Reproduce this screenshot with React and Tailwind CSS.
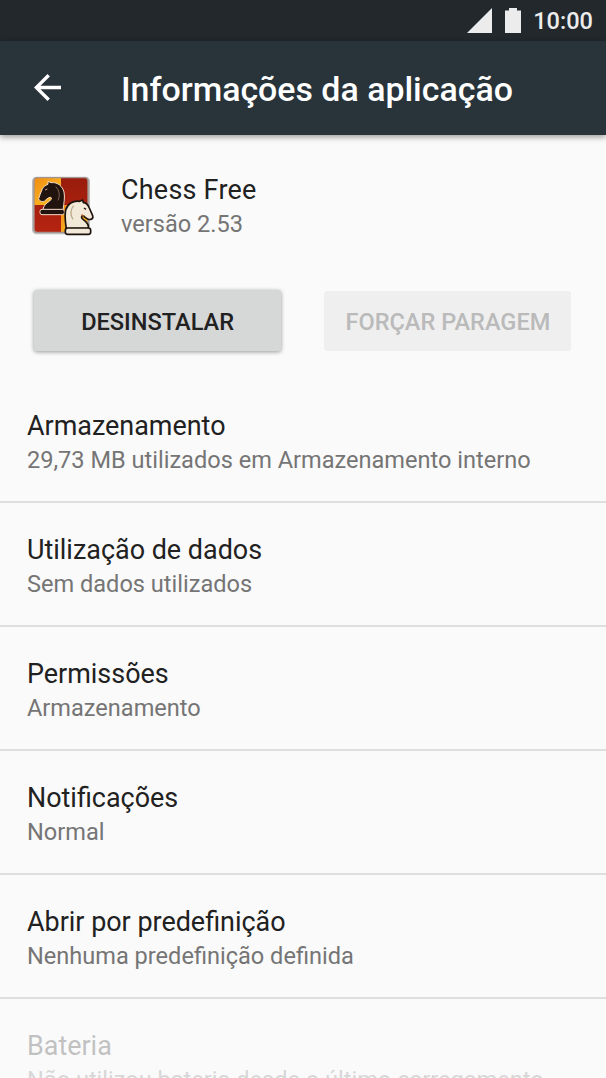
// AppInfoPage
import React from 'react';

const settings = [
    { title: 'Armazenamento', summary: '29,73 MB utilizados em Armazenamento interno' },
    { title: 'Utilização de dados', summary: 'Sem dados utilizados' },
    { title: 'Permissões', summary: 'Armazenamento' },
    { title: 'Notificações', summary: 'Normal' },
    { title: 'Abrir por predefinição', summary: 'Nenhuma predefinição definida' },
    { title: 'Bateria', summary: 'Não utilizou bateria desde o último carregamento', disabled: true },
];

const ChessIcon = () => (
    <svg viewBox="0 0 210 180" className="h-[60px] w-[70px] shrink-0 overflow-visible" aria-hidden="true">
        <defs>
            <linearGradient id="gold" x1="0" y1="0" x2="1" y2="1">
                <stop offset="0" stopColor="#f08a10" />
                <stop offset="1" stopColor="#ffc928" />
            </linearGradient>
            <linearGradient id="red" x1="0" y1="0" x2="0" y2="1">
                <stop offset="0" stopColor="#981c0c" />
                <stop offset="1" stopColor="#b52410" />
            </linearGradient>
            <clipPath id="tile">
                <rect x="15" y="8" width="162" height="164" rx="10" />
            </clipPath>
        </defs>
        <rect x="9" y="5" width="174" height="173" rx="14" fill="#000" opacity="0.25" />
        <g clipPath="url(#tile)">
            <rect x="14" y="6" width="164" height="166" fill="url(#red)" />
            <rect x="14" y="6" width="82" height="84" fill="url(#gold)" />
            <rect x="96" y="90" width="82" height="82" fill="url(#gold)" />
        </g>
        <rect x="15" y="8" width="162" height="164" rx="10" fill="none" stroke="#a39490" strokeWidth="4" />
        {/* black knight */}
        <g fill="#21130e" stroke="#f3d9c8" strokeWidth="3" strokeLinejoin="round">
            <path d="M42 104 C43 92 52 85 62 78 C69 72 69 67 63 67 C56 69 52 73 47 78 C40 82 31 78 29 71 C32 62 35 53 39 44 C42 36 49 31 57 28 L57 19 L66 23 C86 21 100 33 105 51 C108 67 105 83 102 104 Z" />
            <rect x="33" y="103" width="73" height="16" rx="6" />
        </g>
        <path d="M80 35 C91 46 94 60 87 76" fill="none" stroke="#806659" strokeWidth="3" />
        <path d="M48 45 L55 42" stroke="#c3aa9a" strokeWidth="3" />
        {/* white knight */}
        <g fill="#f2e9d8" stroke="#1d130e" strokeWidth="5" strokeLinejoin="round">
            <path d="M178 161 C181 149 173 141 163 134 C155 128 156 123 164 124 C169 127 173 131 178 133 C187 135 194 130 191 122 L181 99 C177 89 170 83 163 83 L161 75 L152 79 C132 76 115 87 110 105 C106 124 109 140 112 161 Z" />
            <rect x="109" y="159" width="76" height="19" rx="7" />
        </g>
        <path d="M134 92 C124 103 123 120 132 133" fill="none" stroke="#bba98c" strokeWidth="4" />
        <path d="M165 99 L171 103" stroke="#1d130e" strokeWidth="4" />
        <path d="M157 120 L166 124" stroke="#9b5a20" strokeWidth="5" />
    </svg>
);

const StatusBar = () => (
    <div className="flex h-[41px] shrink-0 items-center justify-end bg-[#22282c] pr-[13px] text-[#ececec]">
        <svg viewBox="0 0 25 25" className="mr-[13px] mb-px h-[25px] w-[25px]" fill="currentColor">
            <path d="M25 0V25H0z" />
        </svg>
        <svg viewBox="0 0 16 25" className="mr-[12px] mb-px h-[25px] w-[16px]" fill="currentColor">
            <path d="M4 0h8v2.500h4V25H0V2.500h4z" />
        </svg>
        <span className="pt-[3px] text-[23.570px] leading-none font-medium">10:00</span>
    </div>
);

const SettingRow = ({ title, summary, disabled }) => (
    <li className="h-[123.850px] border-b-2 border-[#dfdfdf] pt-[30px] pl-[27px] whitespace-nowrap">
        <div className={disabled ? 'opacity-[0.26]' : ''}>
            <h2 className="text-[26.930px] leading-[34px] text-[#212121]">{title}</h2>
            <p className="text-[23.570px] leading-[34px] text-[#757575]">{summary}</p>
        </div>
    </li>
);

const App = () => {
    return (
        <div className="flex h-[1078px] w-[606px] flex-col overflow-hidden bg-[#fafafa] font-[Roboto,sans-serif]">
            <StatusBar />
            {/* toolbar */}
            <header className="flex h-[94px] shrink-0 items-center bg-[#28333a] text-white shadow-[0_2px_6px_rgba(0,0,0,0.4)]">
                <button className="ml-[34px] w-[87px] pb-[2px]" aria-label="Voltar">
                    <svg viewBox="4 4 16 16" className="h-[27px] w-[27px]" fill="currentColor">
                        <path d="M20 11H7.830l5.590-5.590L12 4l-8 8 8 8 1.410-1.410L7.830 13H20v-2z" />
                    </svg>
                </button>
                <h1 className="pt-[4px] text-[33.900px] leading-none font-medium whitespace-nowrap">Informações da aplicação</h1>
            </header>
            {/* application */}
            <section className="flex h-[155px] shrink-0 items-start pt-[38px] pl-[29px]">
                <div className="mr-[22px] pt-[2px]">
                    <ChessIcon />
                </div>
                <div>
                    <h2 className="text-[26.930px] leading-[34px] tracking-[0.25px] text-[#212121]">Chess Free</h2>
                    <p className="text-[23.570px] leading-[34px] text-[#757575]">versão 2.53</p>
                </div>
            </section>
            {/* actions */}
            <section className="flex h-[89.400px] shrink-0 items-start gap-[43px] pr-[35px] pl-[33.500px] text-[23.570px] font-medium whitespace-nowrap">
                <button className="h-[61px] flex-1 rounded-[3px] bg-[#d6d7d7] pt-[4px] pl-px text-[#212121] shadow-[0_1px_4px_rgba(0,0,0,0.4)]">DESINSTALAR</button>
                <button disabled className="mt-px h-[60px] flex-1 rounded-[3px] bg-[#efefef] pt-[3px] pl-px text-[#bababa]">
                    FORÇAR PARAGEM
                </button>
            </section>
            <ul>
                {settings.map((item) => (
                    <SettingRow key={item.title} {...item} />
                ))}
            </ul>
        </div>
    );
};

export default App;
